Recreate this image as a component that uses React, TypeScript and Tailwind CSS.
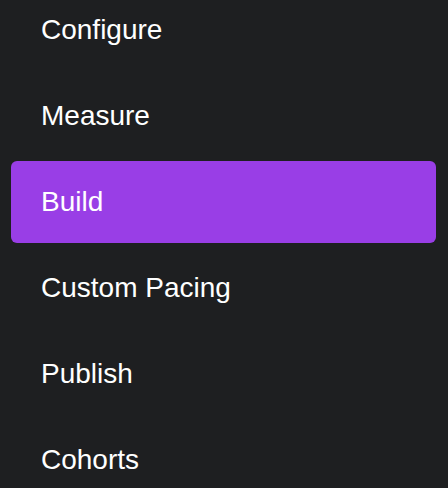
const ITEMS = ["Configure", "Measure", "Build", "Custom Pacing", "Publish", "Cohorts"]

export default function App() {
  const active = "Build"

  return (
    <div className="h-[488px] w-[448px] overflow-hidden bg-[#1e1f21] font-['Liberation_Sans',Arial,sans-serif]">
      {/* Nav list, scrolled slightly so the first row is clipped */}
      <nav className="-mt-[11px] flex flex-col gap-1 pl-[11px] pr-[12px]">
        {ITEMS.map((item) => (
          <div
            key={item}
            className={
              item === active
                ? "flex h-[82px] items-center rounded-md bg-[#993ee6] pl-[30px] text-[28px] text-white"
                : "flex h-[82px] items-center rounded-md pl-[30px] text-[28px] text-white"
            }
          >
            {item}
          </div>
        ))}
      </nav>
    </div>
  )
}
